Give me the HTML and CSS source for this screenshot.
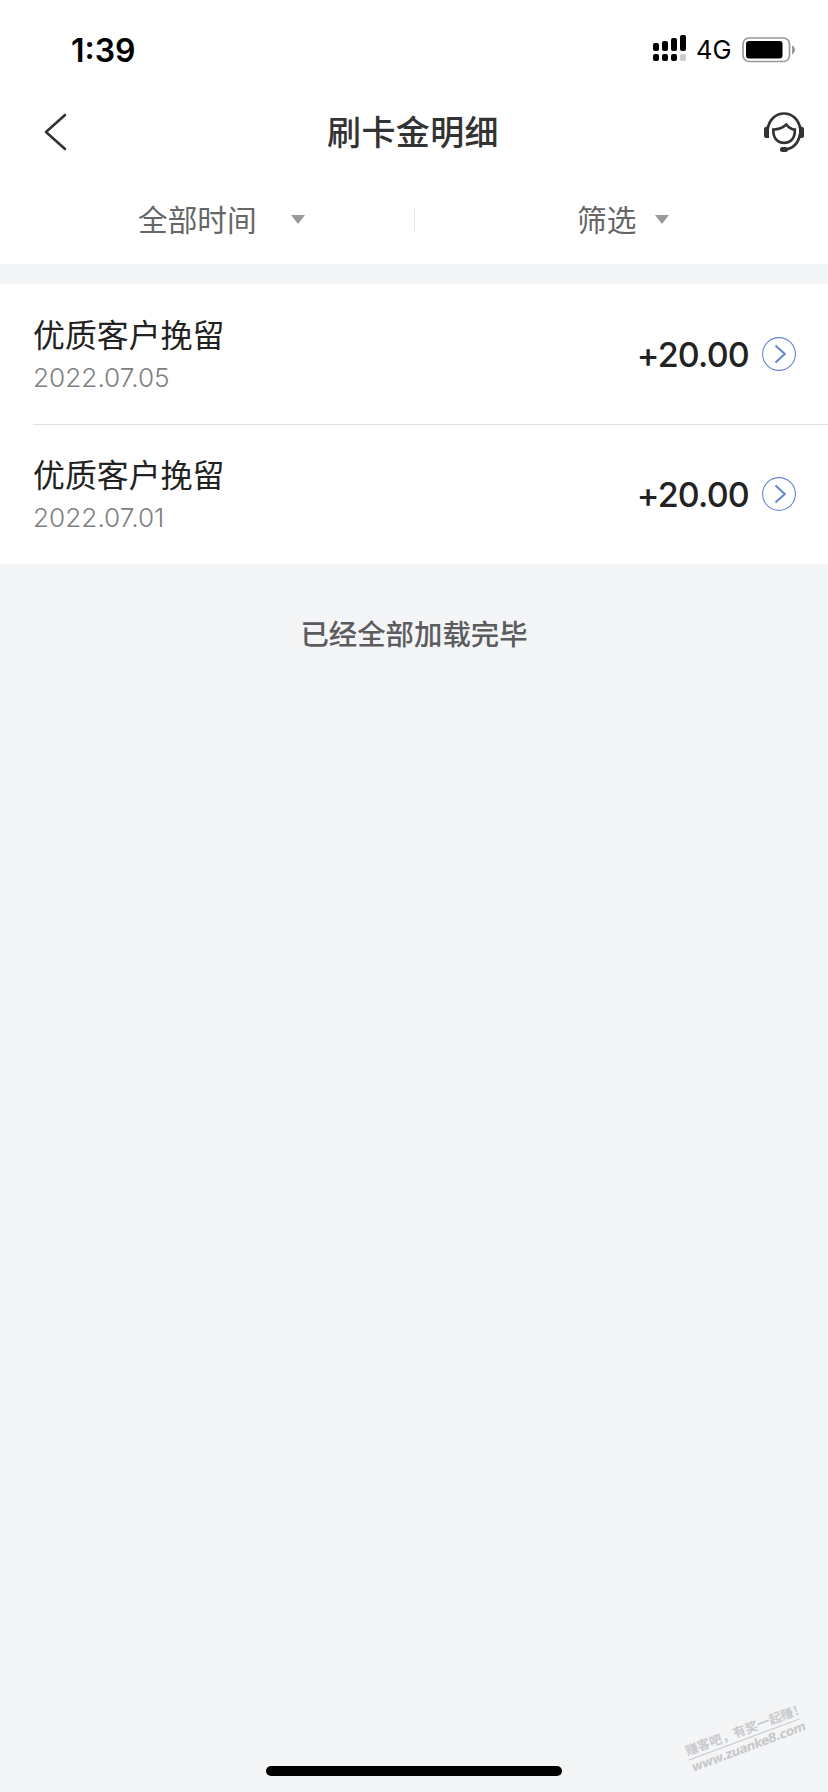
FILE: index.html
```html
<!DOCTYPE html>
<html lang="zh-CN">
<head>
<meta charset="utf-8">
<title>刷卡金明细</title>
<link rel="stylesheet" href="styles.css">
</head>
<body>
<div class="screen">
  <header class="status-bar">
    <span class="time">1:39</span>
    <div class="status-icons">
      <svg class="signal" width="34" height="27" viewBox="0 0 34 27">
        <rect x="0" y="8" width="6" height="8" rx="2"/>
        <rect x="9" y="6" width="6" height="10" rx="2"/>
        <rect x="18" y="3" width="6" height="13" rx="2"/>
        <rect x="27" y="0" width="6" height="16" rx="2"/>
        <rect x="0" y="19" width="6" height="7" rx="2"/>
        <rect x="9" y="19" width="6" height="7" rx="2"/>
        <rect x="18" y="19" width="6" height="7" rx="2"/>
        <rect x="27" y="19" width="6" height="7" rx="2" fill="#ccc"/>
      </svg>
      <span class="network">4G</span>
      <svg class="battery" width="54" height="26" viewBox="0 0 54 26">
        <rect x="1" y="1" width="46.5" height="23.5" rx="6" fill="none" stroke="#999" stroke-width="1.7"/>
        <rect x="4" y="4" width="36.5" height="17.5" rx="3"/>
        <path d="M50 8.500c4 1.300 4 7.500 0 8.800z" fill="#999"/>
      </svg>
    </div>
  </header>

  <nav class="nav-bar">
    <svg class="back" width="24" height="40" viewBox="0 0 24 40" fill="none" stroke="#333" stroke-width="2.600" stroke-linecap="round" stroke-linejoin="round"><path d="M21 3 2 20l19 17"/></svg>
    <h1 class="title">刷卡金明细</h1>
    <svg class="service" width="40" height="40" viewBox="0 0 40 40" fill="none" stroke="#333" stroke-width="2.700">
      <path d="M3.800 16.500C5.500 7 12 1.500 20 1.500S34.500 7 36.200 16.500M36 22C34.500 31 29 36.800 20 37.600"/>
      <path d="M0 17q0-1.800 2-2.300l3-.7v12H2q-2 0-2-2zM40 17q0-1.800-2-2.300l-3-.7v12h3q2 0 2-2z" fill="#333" stroke="none"/>
      <rect x="16" y="35" width="8" height="5" rx="2.500" fill="#333" stroke="none"/>
      <path d="M9.300 17.600c5.200 0 9-1.200 13-5 3.200 3.600 5.500 4.800 8.500 5 .5 8.200-4 13.200-10.700 13.200S8.900 25.800 9.300 17.600z"/>
    </svg>
  </nav>

  <div class="filters">
    <div class="filter filter-time"><span>全部时间</span><i class="caret"></i></div>
    <div class="filter filter-type"><span>筛选</span><i class="caret"></i></div>
  </div>

  <main class="list">
    <article class="row">
      <div class="info">
        <h2 class="name">优质客户挽留</h2>
        <time class="date">2022.07.05</time>
      </div>
      <span class="amount">+20.00</span>
      <svg class="go" width="34" height="34" viewBox="0 0 34 34" fill="none" stroke="#6685d0"><circle cx="17" cy="17" r="16.400" stroke-width="1.100"/><path d="M13.500 8.500 22.800 17l-9.300 8.500" stroke-width="2"/></svg>
    </article>
    <article class="row">
      <div class="info">
        <h2 class="name">优质客户挽留</h2>
        <time class="date">2022.07.01</time>
      </div>
      <span class="amount">+20.00</span>
      <svg class="go" width="34" height="34" viewBox="0 0 34 34" fill="none" stroke="#6685d0"><circle cx="17" cy="17" r="16.400" stroke-width="1.100"/><path d="M13.500 8.500 22.800 17l-9.300 8.500" stroke-width="2"/></svg>
    </article>
  </main>
  <p class="end">已经全部加载完毕</p>

  <div class="watermark">
    <div class="slogan">赚客吧，有奖一起赚！</div>
    <div class="site">www.zuanke8.com</div>
  </div>
  <div class="home-indicator"></div>
</div>
</body>
</html>
```
FILE: styles.css
```css
* { box-sizing: border-box; }
body { margin: 0; background: #f4f5f7; font-family: "Noto Sans CJK SC", sans-serif; }
h1, h2, p { margin: 0; }
svg { display: block; flex: none; }
.screen { position: relative; width: 828px; height: 1792px; overflow: hidden; display: flex; flex-direction: column; background: #f4f5f7; }
.status-bar { height: 88px; background: #fff; display: flex; justify-content: space-between; align-items: flex-start; padding: 35px 32px 0 71px; font-family: Inter, sans-serif; color: #000; }
.time { font-size: 32px; line-height: 31px; font-weight: 600; }
.status-icons { display: flex; align-items: flex-start; }
.network { font-size: 25.500px; line-height: 30px; margin-left: 9px; width: 38px; white-space: nowrap; }
.battery { margin: 2px 0 0 8px; }
.nav-bar { height: 88px; background: #fff; display: flex; align-items: center; justify-content: space-between; padding: 0 24px 0 44px; }
.title { font-size: 34px; line-height: 50px; font-weight: 500; color: #333; letter-spacing: .4px; margin-left: -6px; margin-top: -2px; }
.filters { height: 88px; background: #fff; display: grid; grid-template-columns: 415px 413px; align-items: center; }
.filter { display: flex; align-items: center; height: 24px; font-size: 29.700px; line-height: 44px; font-weight: 400; color: #666; }
.filter span { margin-top: -3px; }
.filter-time { padding-left: 138px; gap: 34px; border-right: 1px solid #e2e2e2; }
.filter-type { padding-left: 162px; gap: 19px; }
.caret { margin-top: -2px; border: 7.500px solid transparent; border-top: 9px solid #999; border-bottom: 0; }
.list { margin-top: 20px; background: #fff; }
.row { height: 140px; display: flex; align-items: center; margin-left: 33px; padding-right: 32px; }
.row + .row { box-shadow: inset 0 1px #e0e0e0; }
.info { flex: 1; }
.name { font-size: 31.900px; line-height: 42px; font-weight: 400; color: #222; }
.date { display: block; font-family: Inter, sans-serif; font-size: 26.200px; line-height: 42px; padding-top: 3px; margin-bottom: -2px; font-weight: 300; color: #808080; }
.amount { font-family: Inter, sans-serif; font-size: 34px; line-height: 44px; font-weight: 500; letter-spacing: -.8px; color: #222; margin-right: 13px; padding-top: 1px; }
.end { margin-top: 47px; text-align: center; font-size: 28.400px; line-height: 44px; font-weight: 500; color: #5c5c5e; }
.watermark { position: absolute; left: 685px; top: 1721px; width: 118px; transform: rotate(-20.400deg); color: #c8c9cb; font-weight: 700; white-space: nowrap; }
.slogan { font-size: 12.700px; line-height: 18px; border-bottom: 1px solid #c8c9cb; }
.site { font-family: "DejaVu Sans", sans-serif; font-style: italic; font-size: 12.500px; line-height: 16px; letter-spacing: -.7px; }
.home-indicator { position: absolute; left: 266px; top: 1766px; width: 296px; height: 10px; border-radius: 5px; background: #000; }
```
